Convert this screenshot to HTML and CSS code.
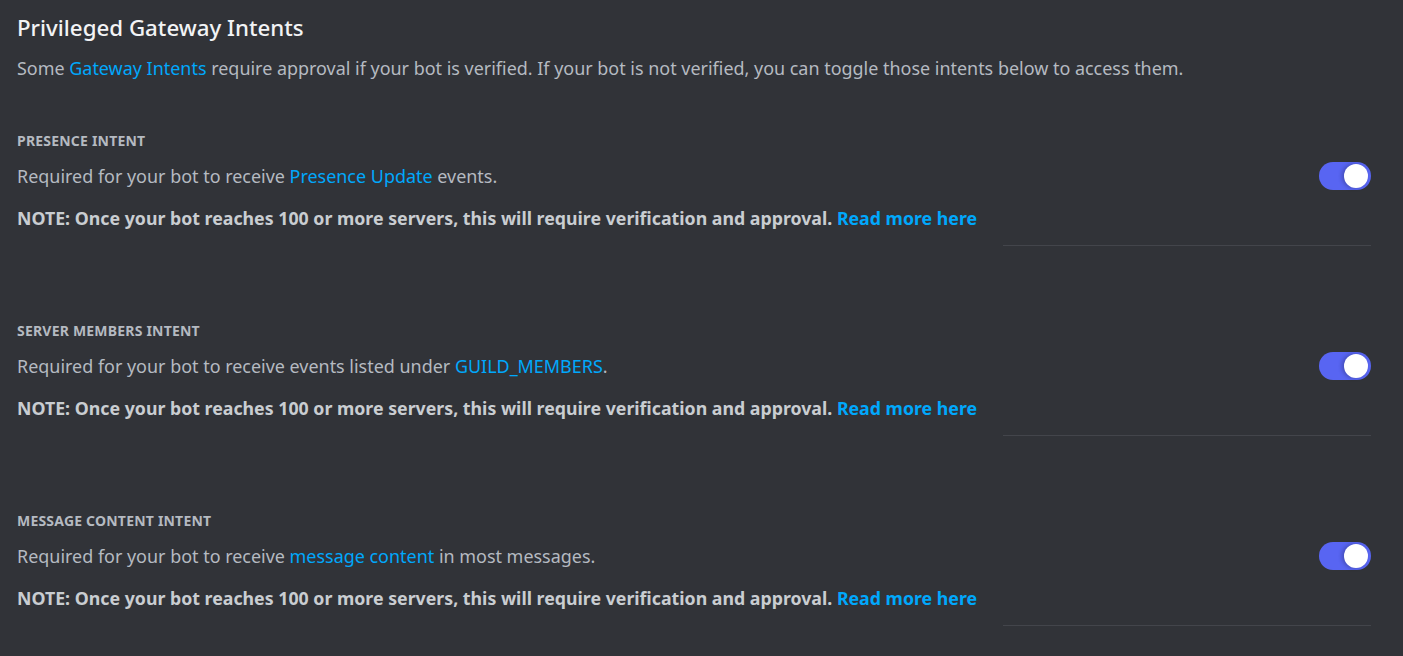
FILE: index.html
```html
<!DOCTYPE html>
<html>
<head>
<meta charset="utf-8">
<link rel="stylesheet" href="styles.css">
</head>
<body>
<div class="page">
  <h2 class="title">Privileged Gateway Intents</h2>
  <p class="intro">Some <a class="link">Gateway Intents</a> require approval if your bot is verified. If your bot is not verified, you can toggle those intents below to access them.</p>

  <section class="intent">
    <h3 class="label">PRESENCE INTENT</h3>
    <div class="row">
      <div class="text">
        <p class="desc">Required for your bot to receive <a class="link">Presence Update</a> events.</p>
        <p class="note">NOTE: Once your bot reaches 100 or more servers, this will require verification and approval. <a class="link">Read more here</a></p>
      </div>
      <div class="toggle"><span class="knob"></span></div>
    </div>
    <div class="divider"></div>
  </section>

  <section class="intent">
    <h3 class="label">SERVER MEMBERS INTENT</h3>
    <div class="row">
      <div class="text">
        <p class="desc">Required for your bot to receive events listed under <a class="link">GUILD_MEMBERS</a>.</p>
        <p class="note">NOTE: Once your bot reaches 100 or more servers, this will require verification and approval. <a class="link">Read more here</a></p>
      </div>
      <div class="toggle"><span class="knob"></span></div>
    </div>
    <div class="divider"></div>
  </section>

  <section class="intent">
    <h3 class="label">MESSAGE CONTENT INTENT</h3>
    <div class="row">
      <div class="text">
        <p class="desc">Required for your bot to receive <a class="link">message content</a> in most messages.</p>
        <p class="note">NOTE: Once your bot reaches 100 or more servers, this will require verification and approval. <a class="link">Read more here</a></p>
      </div>
      <div class="toggle"><span class="knob"></span></div>
    </div>
    <div class="divider"></div>
  </section>
</div>
</body>
</html>
```
FILE: styles.css
```css
html, body {
  margin: 0;
  padding: 0;
  background: #313338;
}
body {
  font-family: "Noto Sans", "Open Sans", sans-serif;
  color: #b5bac1;
  overflow: hidden;
}
.page {
  padding: 16px 32px 0 17px;
}
.title {
  margin: 0;
  font-size: 22.3px;
  line-height: 24px;
  font-weight: 500;
  color: #f2f3f5;
}
.intro {
  margin: 17px 0 0;
  font-size: 17.95px;
  line-height: 22px;
  color: #b5bac1;
}
.link {
  color: #00a8fc;
  cursor: pointer;
}
.intent {
  margin-top: 54px;
}
.intent + .intent {
  margin-top: 77px;
}
.label {
  margin: 0;
  font-size: 14px;
  line-height: 16px;
  font-weight: 700;
  letter-spacing: 0.2px;
  color: #b5bac1;
}
.row {
  display: flex;
  align-items: flex-start;
  justify-content: space-between;
  margin-top: 16px;
}
.desc {
  margin: 0;
  font-size: 17.95px;
  line-height: 22px;
  color: #b5bac1;
}
.note {
  margin: 20px 0 0;
  font-size: 17.75px;
  line-height: 22px;
  font-weight: 700;
  color: #c9cdd1;
}
.toggle {
  width: 52px;
  height: 28px;
  border-radius: 14px;
  background: #5865f2;
  position: relative;
  flex: none;
  margin-top: -3px;
}
.knob {
  position: absolute;
  right: 3px;
  top: 2px;
  width: 24px;
  height: 24px;
  border-radius: 50%;
  background: #ffffff;
  box-shadow: -2px 0 4px rgba(0,0,0,0.25);
}
.divider {
  margin: 16px 0 0 auto;
  width: 368px;
  height: 1px;
  background: #43454b;
}
```
